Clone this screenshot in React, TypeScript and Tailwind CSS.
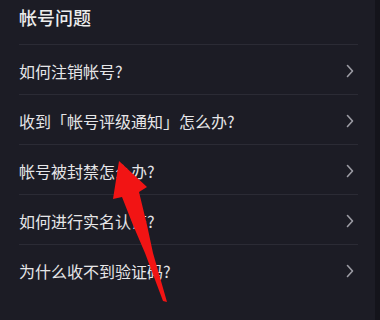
const questions = [
  "如何注销帐号?",
  "收到「帐号评级通知」怎么办?",
  "帐号被封禁怎么办?",
  "如何进行实名认证?",
  "为什么收不到验证码?",
];

function Chevron() {
  return (
    <svg width="8" height="14" viewBox="0 0 8 14" className="mr-[4px]">
      <polyline points="1.5,1.5 6.5,7 1.5,12.5" fill="none" stroke="#9c9ca4" strokeWidth="1.6" strokeLinecap="round" strokeLinejoin="round" />
    </svg>
  );
}

export default function App() {
  return (
    <div
      className="relative flex h-[320px] w-[380px] overflow-hidden bg-[#1c1c25]"
      style={{ fontFamily: '"Noto Sans CJK SC", "Noto Sans", sans-serif' }}
    >
      <div className="w-[375px] pl-[19px] pr-[17px]">
        <div className="h-[44px] pt-[5px] text-[18px] leading-[24px] font-medium text-[#ececec]">帐号问题</div>
        {questions.map((q) => (
          <div key={q}>
            <div className="h-px bg-[#2b2b35]" />
            <div className="flex h-[49px] items-center justify-between pt-[3px]">
              <span className="text-[16px] leading-[22px] text-[#e6e6e8]">{q}</span>
              <Chevron />
            </div>
          </div>
        ))}
      </div>
      <div className="w-[5px] bg-[#14141b]" />

      <svg className="pointer-events-none absolute left-0 top-0" width="380" height="320" viewBox="0 0 380 320">
        <polygon
          points="119,161 147,187 139,192 147,225 153,253 167,302 163,301 145,253 133,225 122,197 113,199"
          fill="#f21414"
        />
      </svg>
    </div>
  );
}
